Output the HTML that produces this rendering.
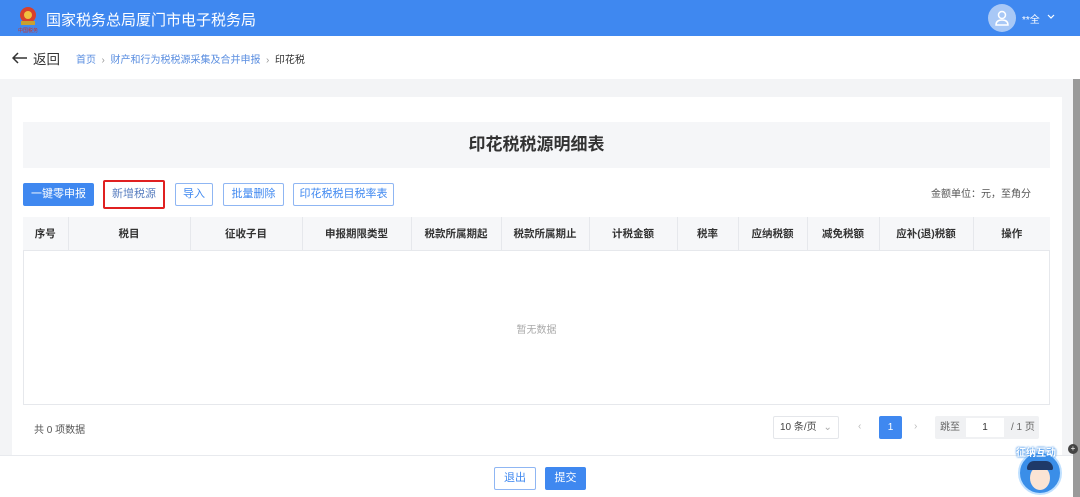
<!DOCTYPE html>
<html><head><meta charset="utf-8"><style>
*{margin:0;padding:0;box-sizing:border-box}
body{width:1080px;height:497px;overflow:hidden;background:#f3f4f6;font-family:"Liberation Sans","Noto Sans CJK SC",sans-serif;position:relative;color:#333}
.top{position:absolute;left:0;top:0;width:1080px;height:36px;background:#3f88f0;color:#fff}
.crumb{position:absolute;left:0;top:36px;width:1080px;height:43px;background:#fff}
.card{position:absolute;left:12px;top:97px;width:1050px;height:360px;background:#fff}
.foot{position:absolute;left:0;top:455px;width:1073px;height:42px;background:#fff;border-top:1px solid #e8eaee}
.btn{position:absolute;height:23px;border:1px solid #8fb6f3;color:#3f88f0;font-size:11px;line-height:21px;text-align:center;border-radius:2px;background:#fff}
table{border-collapse:collapse;position:absolute;left:23px;top:217px;width:1027px;font-size:10.5px}
th{height:33px;background:#f6f7f9;border-right:1px solid #e6e8ec;border-bottom:1px solid #e6e8ec;font-weight:bold;color:#333}
th:last-child{border-right:none}
</style></head><body>
<div class="top">
  <svg style="position:absolute;left:15px;top:5px" width="26" height="28" viewBox="0 0 26 28"><circle cx="13" cy="10" r="8" fill="#d8402c"/><circle cx="13" cy="10" r="4" fill="#f0c040"/><rect x="6" y="16" width="14" height="4" fill="#c9a030"/><text x="13" y="27" font-size="5" fill="#d03020" text-anchor="middle">中国税务</text></svg>
  <div style="position:absolute;left:46px;top:9px;font-size:15px">国家税务总局厦门市电子税务局</div>
  <div style="position:absolute;left:988px;top:4px;width:28px;height:28px;border-radius:50%;background:#a8c8f6"></div>
  <svg style="position:absolute;left:993px;top:9px" width="18" height="18" viewBox="0 0 18 18" fill="none" stroke="#fff" stroke-width="1.5"><circle cx="9" cy="6" r="3.5"/><path d="M3 16c0-4 3-5 6-5s6 1 6 5z"/></svg>
  <div style="position:absolute;left:1022px;top:11px;font-size:10px">**全</div>
  <svg style="position:absolute;left:1047px;top:14px" width="8" height="6" viewBox="0 0 8 6" fill="none" stroke="#fff" stroke-width="1.2"><path d="M1 1l3 3 3-3"/></svg>
</div>
<div class="crumb">
  <svg style="position:absolute;left:12px;top:16px" width="16" height="12" viewBox="0 0 16 12" fill="none" stroke="#333" stroke-width="1.5"><path d="M15 6H2M6 1L1 6l5 5"/></svg>
  <div style="position:absolute;left:33px;top:12px;font-size:13.5px;color:#333">返回</div>
  <div style="position:absolute;left:76px;top:15px;font-size:10px;color:#5a8ee0">首页 <span style="color:#999">&nbsp;›&nbsp;</span> 财产和行为税税源采集及合并申报 <span style="color:#999">&nbsp;›&nbsp;</span> <span style="color:#333">印花税</span></div>
</div>
<div style="position:absolute;left:1073px;top:79px;width:7px;height:418px;background:#9a9a9a"></div>
<div class="card"></div>
<div style="position:absolute;left:23px;top:122px;width:1027px;height:46px;background:#f5f6f8;text-align:center;font-size:17px;font-weight:bold;line-height:46px;color:#333">印花税税源明细表</div>
<div class="btn" style="left:23px;top:183px;width:71px;background:#3f88f0;border-color:#3f88f0;color:#fff">一键零申报</div>
<div class="btn" style="left:103px;top:180px;width:62px;height:29px;border:2px solid #e02020;color:#5a7fc0;line-height:25px">新增税源</div>
<div class="btn" style="left:175px;top:183px;width:38px">导入</div>
<div class="btn" style="left:223px;top:183px;width:61px">批量删除</div>
<div class="btn" style="left:293px;top:183px;width:101px">印花税税目税率表</div>
<div style="position:absolute;left:931px;top:185px;font-size:10px;color:#555">金额单位：元，至角分</div>
<div style="position:absolute;left:23px;top:217px;width:1027px;height:188px;border:1px solid #e6e8ec"></div>
<table><tr><th style="width:45px">序号</th><th style="width:122px">税目</th><th style="width:112px">征收子目</th><th style="width:109px">申报期限类型</th><th style="width:90px">税款所属期起</th><th style="width:88px">税款所属期止</th><th style="width:88px">计税金额</th><th style="width:61px">税率</th><th style="width:69px">应纳税额</th><th style="width:72px">减免税额</th><th style="width:94px">应补(退)税额</th><th>操作</th></tr></table>
<div style="position:absolute;left:0;width:1073px;top:321px;text-align:center;font-size:10px;color:#aaa">暂无数据</div>
<div style="position:absolute;left:34px;top:421px;font-size:10px;color:#555">共 0 项数据</div>
<div style="position:absolute;left:773px;top:416px;width:66px;height:23px;border:1px solid #e4e6ea;border-radius:2px;font-size:10px;line-height:21px;padding-left:6px;color:#444">10 条/页 <span style="color:#aaa;margin-left:4px">⌄</span></div>
<div style="position:absolute;left:858px;top:421px;font-size:10px;color:#bbb">‹</div>
<div style="position:absolute;left:879px;top:416px;width:23px;height:23px;background:#3f88f0;color:#fff;font-size:10px;text-align:center;line-height:23px;border-radius:2px">1</div>
<div style="position:absolute;left:914px;top:421px;font-size:10px;color:#bbb">›</div>
<div style="position:absolute;left:935px;top:416px;width:104px;height:23px;background:#f0f1f3;border-radius:2px;font-size:10px;color:#666;line-height:23px;padding-left:5px">跳至<span style="position:absolute;left:31px;top:2px;width:38px;height:19px;background:#fff;line-height:19px;text-align:center;color:#333">1</span><span style="position:absolute;left:76px">/ 1 页</span></div>
<div class="foot"></div>
<div class="btn" style="left:494px;top:467px;width:42px">退出</div>
<div class="btn" style="left:545px;top:467px;width:41px;background:#3f88f0;border-color:#3f88f0;color:#fff">提交</div>
<div style="position:absolute;left:1018px;top:451px;width:44px;height:44px;border-radius:50%;background:#3a8ee8;border:2px solid #bfe0ff;overflow:hidden">
  <div style="position:absolute;left:10px;top:13px;width:20px;height:24px;border-radius:50%;background:#fbe4d4"></div>
  <div style="position:absolute;left:7px;top:8px;width:26px;height:9px;border-radius:8px 8px 2px 2px;background:#1f3a68"></div>
</div>
<div style="position:absolute;left:1016px;top:444px;font-size:10px;color:#fff;font-weight:bold;text-shadow:0 0 2px #3a8ee8,0 0 2px #3a8ee8">征纳互动</div>
<div style="position:absolute;left:1068px;top:444px;width:10px;height:10px;border-radius:50%;background:#444;color:#fff;font-size:8px;text-align:center;line-height:10px">+</div>
</body></html>
